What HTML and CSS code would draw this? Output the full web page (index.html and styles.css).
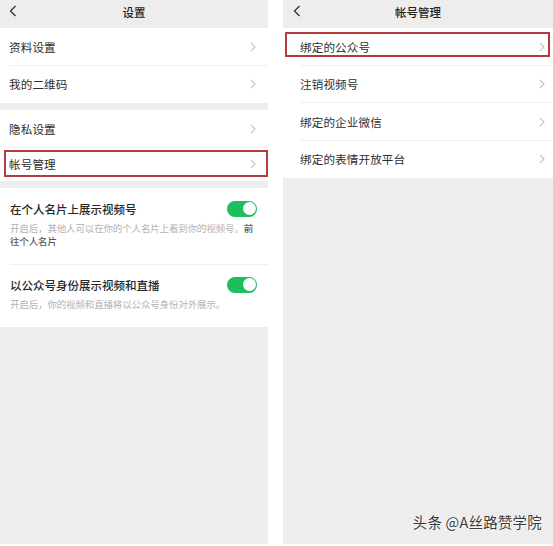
FILE: index.html
```html
<!DOCTYPE html>
<html lang="zh">
<head>
<meta charset="utf-8">
<link rel="stylesheet" href="styles.css">
</head>
<body>
<div class="stage">
  <section class="phone phone-left">
    <header class="nav">
      <svg class="back" width="8" height="12" viewBox="0 0 8 12"><polyline points="6.5,1 1.5,6 6.5,11" fill="none" stroke="#333" stroke-width="1.3"/></svg>
      <span class="nav-title">设置</span>
    </header>
    <div class="group">
      <div class="row"><span>资料设置</span><svg class="chev" width="6" height="10" viewBox="0 0 6 10"><polyline points="1,1 5,5 1,9" fill="none" stroke="#c4c4c4" stroke-width="1.1"/></svg></div>
      <div class="row last"><span>我的二维码</span><svg class="chev" width="6" height="10" viewBox="0 0 6 10"><polyline points="1,1 5,5 1,9" fill="none" stroke="#c4c4c4" stroke-width="1.1"/></svg></div>
    </div>
    <div class="group">
      <div class="row"><span>隐私设置</span><svg class="chev" width="6" height="10" viewBox="0 0 6 10"><polyline points="1,1 5,5 1,9" fill="none" stroke="#c4c4c4" stroke-width="1.1"/></svg></div>
      <div class="row last short marked marked-left"><span>帐号管理</span><svg class="chev" width="6" height="10" viewBox="0 0 6 10"><polyline points="1,1 5,5 1,9" fill="none" stroke="#c4c4c4" stroke-width="1.1"/></svg></div>
    </div>
    <div class="group toggles">
      <div class="titem">
        <div class="thead"><span class="ttitle">在个人名片上展示视频号</span><span class="switch"></span></div>
        <p class="tdesc">开启后，其他人可以在你的个人名片上看到你的视频号。<b>前往个人名片</b></p>
      </div>
      <div class="titem second">
        <div class="thead"><span class="ttitle">以公众号身份展示视频和直播</span><span class="switch"></span></div>
        <p class="tdesc">开启后，你的视频和直播将以公众号身份对外展示。</p>
      </div>
    </div>
  </section>
  <section class="phone phone-right">
    <header class="nav">
      <svg class="back" width="8" height="12" viewBox="0 0 8 12"><polyline points="6.5,1 1.5,6 6.5,11" fill="none" stroke="#333" stroke-width="1.3"/></svg>
      <span class="nav-title">帐号管理</span>
    </header>
    <div class="group">
      <div class="row wide marked marked-right"><span>绑定的公众号</span><svg class="chev" width="6" height="10" viewBox="0 0 6 10"><polyline points="1,1 5,5 1,9" fill="none" stroke="#c4c4c4" stroke-width="1.1"/></svg></div>
      <div class="row wide"><span>注销视频号</span><svg class="chev" width="6" height="10" viewBox="0 0 6 10"><polyline points="1,1 5,5 1,9" fill="none" stroke="#c4c4c4" stroke-width="1.1"/></svg></div>
      <div class="row wide"><span>绑定的企业微信</span><svg class="chev" width="6" height="10" viewBox="0 0 6 10"><polyline points="1,1 5,5 1,9" fill="none" stroke="#c4c4c4" stroke-width="1.1"/></svg></div>
      <div class="row wide last"><span>绑定的表情开放平台</span><svg class="chev" width="6" height="10" viewBox="0 0 6 10"><polyline points="1,1 5,5 1,9" fill="none" stroke="#c4c4c4" stroke-width="1.1"/></svg></div>
    </div>
    <div class="watermark">头条 @A丝路赞学院</div>
  </section>
</div>
</body>
</html>
```
FILE: styles.css
```css
* { box-sizing: border-box; }
html, body { margin: 0; padding: 0; background: #ffffff; }
body {
  font-family: "Noto Sans CJK SC", "Noto Sans", "Liberation Sans", sans-serif;
  color: #2b2b2b;
  width: 553px;
  height: 546px;
  overflow: hidden;
}
.stage {
  display: flex;
  gap: 15px;
  height: 544px;
}
.phone {
  position: relative;
  background: #ededed;
  display: flex;
  flex-direction: column;
}
.phone-left { width: 268px; }
.phone-right { width: 270px; }

.nav {
  position: relative;
  height: 28px;
  padding-bottom: 4px;
  display: flex;
  align-items: center;
  justify-content: center;
  flex-shrink: 0;
}
.back { position: absolute; left: 9px; top: 5px; }
.phone-right .back { left: 10px; }
.nav-title { font-size: 11.5px; font-weight: 500; color: #222; }

.group { background: #fff; margin-bottom: 7px; }
.row {
  position: relative;
  height: 37.5px;
  display: flex;
  align-items: center;
  justify-content: space-between;
  padding: 0 12px 0 9px;
  font-size: 11.6px;
  letter-spacing: 0.1px;
  color: #2e2e2e;
}
.row::after {
  content: "";
  position: absolute;
  left: 9px; right: 0; bottom: 0;
  height: 1px;
  background: #f0f0f0;
}
.row.last::after { display: none; }
.row.short { height: 33px; }
.row.wide { padding: 0 8px 0 17px; }
.row.wide::after { left: 17px; }
.chev { flex-shrink: 0; }

.marked::before {
  content: "";
  position: absolute;
  border: 2px solid #b53a3a;
  pointer-events: none;
}
.marked-left::before { left: 4px; right: 0; top: 2px; bottom: 4px; }
.marked-right::before { left: 2px; right: 3px; top: 4px; bottom: 9px; }

.toggles { margin-bottom: 0; }
.titem {
  position: relative;
  padding: 13px 11px 17px 10px;
}
.titem.second { padding: 12px 11px 16px 10px; }
.titem::after {
  content: "";
  position: absolute;
  left: 10px; right: 0; bottom: 0;
  height: 1px;
  background: #f0f0f0;
}
.titem.second::after { display: none; }
.thead {
  display: flex;
  align-items: center;
  justify-content: space-between;
  height: 16px;
}
.ttitle { font-size: 11.5px; color: #262626; font-weight: 500; }
.switch {
  position: relative;
  width: 30px;
  height: 16px;
  border-radius: 8px;
  background: #1ebd5e;
  flex-shrink: 0;
}
.switch::after {
  content: "";
  position: absolute;
  right: 1.5px; top: 1.5px;
  width: 13px; height: 13px;
  border-radius: 50%;
  background: #fff;
}
.tdesc {
  margin: 5px 0 0;
  font-size: 9.5px;
  line-height: 13px;
  letter-spacing: -0.15px;
  color: #b3b3b3;
  width: 250px;
}
.tdesc b { font-weight: 500; color: #5a5a5a; }

.watermark {
  position: absolute;
  right: 11px;
  bottom: 12px;
  font-size: 14.5px;
  color: #3a3a3a;
  letter-spacing: 0.2px;
  text-shadow: 0 0 2px #fff, 0 0 2px #fff;
}
```
